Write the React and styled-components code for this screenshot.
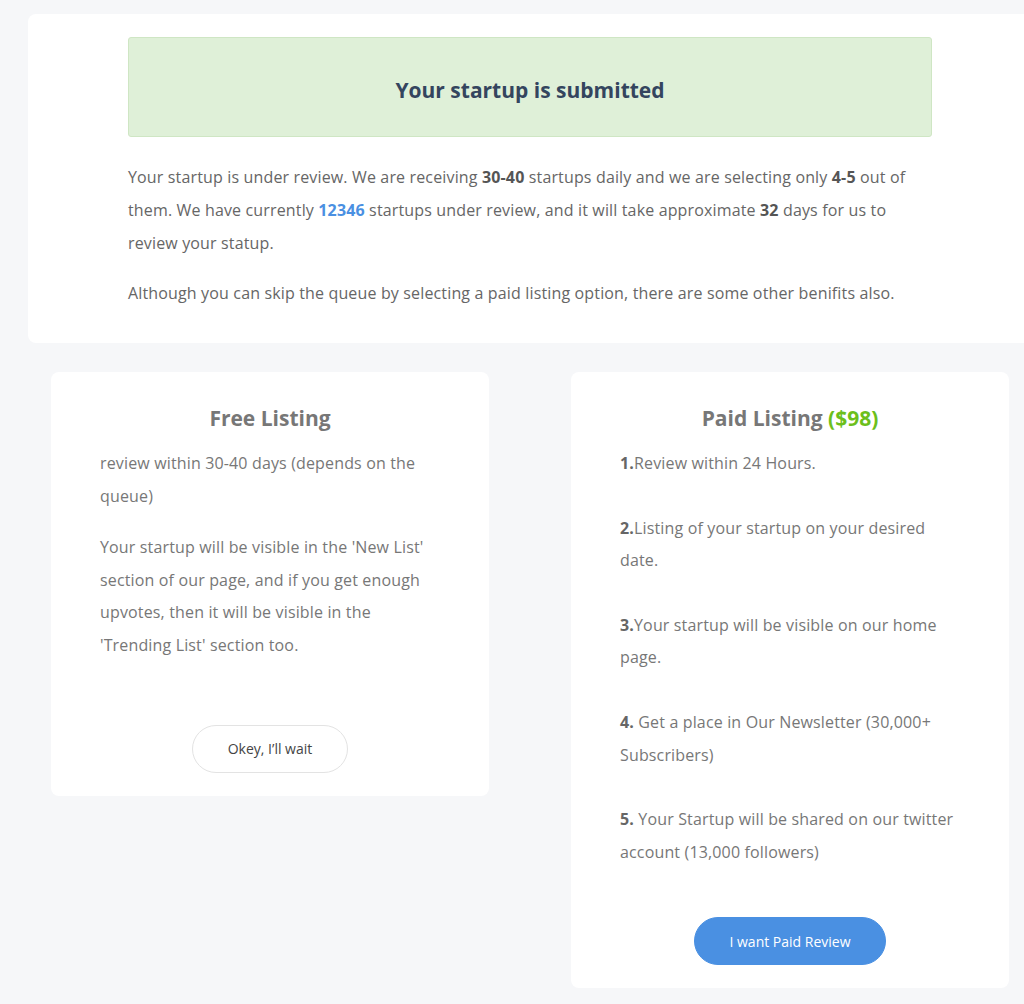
import React from "react";
import styled, { createGlobalStyle } from "styled-components";

const Global = createGlobalStyle`
  html, body { margin: 0; padding: 0; overflow: hidden; }
  body {
    background: #f6f7f9;
    font-family: "Open Sans", "Noto Sans", sans-serif;
    -webkit-font-smoothing: antialiased;
  }
`;

const Page = styled.div`
  width: 1024px;
  min-height: 1004px;
  padding-top: 14px;
  box-sizing: border-box;
`;

const TopCard = styled.section`
  width: 1004px;
  margin-left: 28px;
  box-sizing: border-box;
  background: #fff;
  border-radius: 8px 0 0 8px;
  padding: 23px 100px 33px;
`;

const Banner = styled.div`
  height: 100px;
  box-sizing: border-box;
  background: #dff0d8;
  border: 1px solid #cfe6c4;
  border-radius: 3px;
  display: flex;
  align-items: center;
  justify-content: center;
  padding-top: 5px;
`;

const BannerTitle = styled.h1`
  margin: 0;
  font-size: 21px;
  font-weight: 700;
  color: #34455e;
`;

const Para = styled.p`
  margin: 24px 0 0;
  font-size: 16px;
  letter-spacing: 0.15px;
  line-height: 33px;
  color: #666;
  & + & { margin-top: 17px; }
`;

const Strong = styled.b`
  font-weight: 700;
  color: ${(p) => (p.$blue ? "#4a90e2" : "#555")};
`;

const Columns = styled.div`
  display: grid;
  grid-template-columns: 438px 438px;
  column-gap: 82px;
  align-items: start;
  padding: 29px 0 16px 51px;
`;

const Card = styled.section`
  background: #fff;
  border-radius: 8px;
  padding: 31px 49px 23px;
  display: flex;
  flex-direction: column;
`;

const CardTitle = styled.h2`
  margin: 0 0 14px;
  text-align: center;
  font-size: 21px;
  font-weight: 700;
  color: #777;
  line-height: 30px;
`;

const Price = styled.span`
  color: #6cbf1c;
`;

const CardText = styled.p`
  margin: 0 0 ${(p) => p.$gap || 19}px;
  font-size: 16px;
  letter-spacing: 0.15px;
  line-height: 32.6px;
  color: #777;
  b { font-weight: 700; color: #666; }
`;

const ButtonRow = styled.div`
  display: flex;
  justify-content: center;
  margin-top: ${(p) => p.$top}px;
`;

const Button = styled.button`
  font-family: "Open Sans", sans-serif;
  font-size: 14px;
  height: 48px;
  border-radius: 24px;
  cursor: pointer;
  padding: 0 ${(p) => (p.$primary ? 34 : 35)}px;
  border: 1px solid ${(p) => (p.$primary ? "#4a90e2" : "#e3e3e3")};
  background: ${(p) => (p.$primary ? "#4a90e2" : "#fff")};
  color: ${(p) => (p.$primary ? "#fff" : "#444")};
`;

export default function App() {
  return (
    <>
      <Global />
      <Page>
        <TopCard>
          <Banner>
            <BannerTitle>Your startup is submitted</BannerTitle>
          </Banner>
          <Para>
            Your startup is under review. We are receiving <Strong>30-40</Strong> startups daily and we are
            selecting only <Strong>4-5</Strong> out of them. We have currently <Strong $blue>12346</Strong>{" "}
            startups under review, and it will take approximate <Strong>32</Strong> days for us to review your
            statup.
          </Para>
          <Para>
            Although you can skip the queue by selecting a paid listing option, there are some other benifits
            also.
          </Para>
        </TopCard>
        <Columns>
          <Card>
            <CardTitle>Free Listing</CardTitle>
            <CardText>review within 30-40 days (depends on the queue)</CardText>
            <CardText>
              Your startup will be visible in the 'New List' section of our page, and if you get enough
              upvotes, then it will be visible in the 'Trending List' section too.
            </CardText>
            <ButtonRow $top={44}>
              <Button>Okey, I’ll wait</Button>
            </ButtonRow>
          </Card>
          <Card>
            <CardTitle>
              Paid Listing <Price>($98)</Price>
            </CardTitle>
            <CardText $gap={32}>
              <b>1.</b>Review within 24 Hours.
            </CardText>
            <CardText $gap={32}>
              <b>2.</b>Listing of your startup on your desired date.
            </CardText>
            <CardText $gap={32}>
              <b>3.</b>Your startup will be visible on our home page.
            </CardText>
            <CardText $gap={32}>
              <b>4.</b> Get a place in Our Newsletter (30,000+ Subscribers)
            </CardText>
            <CardText $gap={32}>
              <b>5.</b> Your Startup will be shared on our twitter account (13,000 followers)
            </CardText>
            <ButtonRow $top={17}>
              <Button $primary>I want Paid Review</Button>
            </ButtonRow>
          </Card>
        </Columns>
      </Page>
    </>
  );
}
